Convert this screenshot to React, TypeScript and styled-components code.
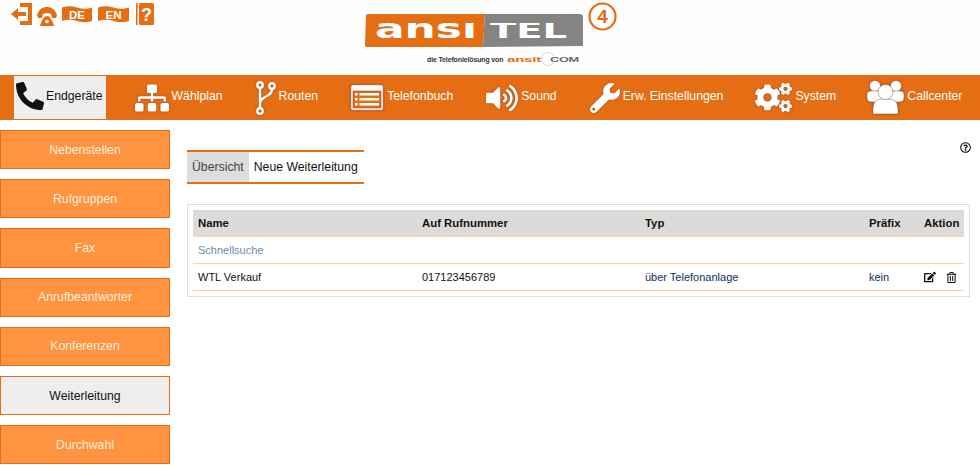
import React from 'react'
import styled, { createGlobalStyle } from 'styled-components'
import {
  FaCogs,
  FaEdit,
  FaPhoneAlt,
  FaRegQuestionCircle,
  FaRegTrashAlt,
  FaSitemap,
  FaVolumeUp,
  FaWrench,
} from 'react-icons/fa'

const ORANGE = '#e56e15'

const GlobalStyle = createGlobalStyle`
  html, body {
    margin: 0;
    padding: 0;
    height: 474px;
    overflow: hidden;
    background: #fff;
    font-family: 'Liberation Sans', Arial, sans-serif;
    font-size: 12.25px;
  }
`

const Header = styled.header`
  height: 75px;
  background: #fefefe;
  display: grid;
  grid-template-columns: 365px 218px 1fr;
`

const QuickIcons = styled.div`
  display: flex;
  align-items: flex-start;
  gap: 4px;
  padding: 3px 0 0 11px;
`

const HandsetSvg = styled.svg`
  margin-top: 4px;
`

const FlagSvg = styled.svg<{ $left?: number }>`
  margin-top: 3px;
  margin-left: ${({ $left }) => $left || 0}px;
`

const GuideSvg = styled.svg`
  margin-left: 3px;
`

const LogoBox = styled.div`
  display: flex;
  flex-direction: column;
  padding-top: 13px;
  position: relative;
`

const VersionMark = styled.svg`
  position: absolute;
  left: 223px;
  top: 2px;
`

const Tagline = styled.div`
  display: flex;
  align-items: center;
  height: 16px;
  margin-top: 4px;
  padding-left: 62px;
  gap: 4px;
  font-size: 7px;
  font-weight: bold;
  letter-spacing: -0.14px;
  color: #333;
  white-space: nowrap;
`

const Nav = styled.nav`
  height: 45px;
  background: ${ORANGE};
  display: flex;
  align-items: center;
  padding-left: 14px;
`

const NavItem = styled.div<{ $active?: boolean; $gap: number }>`
  height: 43px;
  margin-right: ${({ $gap }) => $gap}px;
  padding: 0 3px 0 2px;
  display: flex;
  align-items: center;
  gap: 3px;
  color: ${({ $active }) => ($active ? '#111' : '#fff')};
  background: ${({ $active }) => ($active ? '#eee' : 'transparent')};
  white-space: nowrap;

  & svg {
    flex: none;
    filter: ${({ $active }) =>
      $active ? 'none' : 'drop-shadow(0 0 1px rgba(110, 60, 50, 0.7))'};
  }
`

const NavLabel = styled.span`
  padding-bottom: 4px;
`

const Handset = styled(FaPhoneAlt)`
  margin: 0 -1px 4px 0;
`

const Main = styled.main`
  display: grid;
  grid-template-columns: 170px 1fr;
  column-gap: 17px;
  padding: 10px 10px 0 0;
`

const Sidebar = styled.aside`
  display: flex;
  flex-direction: column;
  gap: 10px;
`

const SideItem = styled.div<{ $active?: boolean }>`
  height: 39.2px;
  box-sizing: border-box;
  border: 1px solid ${ORANGE};
  background: ${({ $active }) => ($active ? '#eee' : '#ff9340')};
  color: ${({ $active }) => ($active ? '#111' : '#ffeedd')};
  display: flex;
  align-items: center;
  justify-content: center;
`

const Content = styled.section`
  position: relative;
  padding-top: 20px;
`

const HelpButton = styled.div`
  position: absolute;
  right: -1px;
  top: 12px;
  line-height: 0;
  color: #111;
`

const Tabs = styled.div`
  display: inline-flex;
  height: 30px;
  border-top: 2px solid ${ORANGE};
  border-bottom: 2px solid ${ORANGE};
`

const Tab = styled.div<{ $active?: boolean }>`
  padding: 0 5px;
  display: flex;
  align-items: center;
  color: ${({ $active }) => ($active ? '#444' : '#111')};
  background: ${({ $active }) => ($active ? '#ddd' : '#fff')};
  &:last-child {
    padding-right: 6px;
  }
`

const Panel = styled.div`
  margin-top: 20px;
  border: 1px solid #ddd;
  padding: 5px;
`

const Row = styled.div<{ $head?: boolean }>`
  display: grid;
  grid-template-columns: 224px 223px 224px 55px 45px;
  height: 26px;
  align-items: center;
  border-bottom: 1px solid #fcd0a8;
  background: ${({ $head }) => ($head ? '#dcdbd9' : '#fff')};
  font-size: ${({ $head }) => ($head ? '11.375px' : '11px')};
  font-weight: ${({ $head }) => ($head ? 'bold' : 'normal')};
  color: #111;
`

const Cell = styled.div<{ $blue?: boolean }>`
  padding-left: 5px;
  color: ${({ $blue }) => ($blue ? '#0f2f60' : 'inherit')};
  white-space: nowrap;
`

const SearchLabel = styled.div`
  padding-left: 5px;
  color: #6d8bb0;
`

const Actions = styled.div`
  display: flex;
  align-items: center;
  gap: 10px;
  padding-left: 5px;
`

const BranchIcon = () => (
  <svg width="20" height="36" viewBox="0 0 20 36" fill="none" stroke="#fff" strokeWidth="2.4">
    <circle cx="4" cy="5" r="2.7" />
    <circle cx="16" cy="6" r="2.7" />
    <circle cx="4" cy="31" r="2.7" />
    <path d="M4 8v20M16 9c0 9-12 6-12 15" />
  </svg>
)

const BookIcon = () => (
  <svg width="34" height="27" viewBox="0 0 34 27">
    <rect x="0.8" y="0.8" width="32.4" height="25.4" rx="2" fill="#fff" stroke="#8a5a3c" strokeWidth="0.6" />
    <rect x="3" y="7" width="28" height="17" fill={ORANGE} stroke="#704030" strokeWidth="0.5" />
    <g fill="#fff">
      <rect x="5" y="9" width="2.5" height="2.5" />
      <rect x="5" y="14" width="2.5" height="2.5" />
      <rect x="5" y="19" width="2.5" height="2.5" />
      <rect x="9.5" y="9" width="19.5" height="2.5" />
      <rect x="9.5" y="14" width="19.5" height="2.5" />
      <rect x="9.5" y="19" width="19.5" height="2.5" />
    </g>
  </svg>
)

const TeamIcon = () => (
  <svg width="37" height="35" viewBox="0 0 37 35" fill="#fff" stroke="#8a5a3c" strokeWidth="0.5">
    <circle cx="8" cy="6" r="5.5" />
    <circle cx="29" cy="6" r="5.5" />
    <path d="M0 14Q0 11 4 11H12Q16 11 16 16V22H5Q0 22 0 18z" />
    <path d="M37 14Q37 11 33 11H25Q21 11 21 16V22H32Q37 22 37 18z" />
    <path d="M6 34V28Q6 20 14 19H23Q31 20 31 28V34z" strokeLinejoin="round" />
    <circle cx="18.5" cy="12" r="7.5" />
  </svg>
)

const ExitIcon = () => (
  <svg width="21" height="22" viewBox="0 0 21 22" fill={ORANGE}>
    <path d="M9 0h12v22H9v-4h8V4H9z" />
    <path d="M0 11 7 5v4h8v4H7v4z" />
  </svg>
)

const HandsetIcon = () => (
  <HandsetSvg width="22" height="20" viewBox="0 0 22 20" fill={ORANGE}>
    <path d="M1 8C3 2 7 0 11 0s8 2 10 8l-1 3h-4l-1-4C13 6 9 6 7 7l-1 4H2z" />
    <path d="M4 19c1-5 4-10 7-10s6 5 7 10z" />
    <circle cx="11" cy="14.5" r="1.8" fill="#fff" />
  </HandsetSvg>
)

const FlagIcon = ({ label, width, left }: { label: string; width: number; left?: number }) => (
  <FlagSvg width={width} height="17" viewBox={`0 0 ${width} 17`} $left={left}>
    <path
      d={`M0 1.5Q${width / 4} -1 ${width / 2} 1.5T${width} 1.5V15Q${(width * 3) / 4} 17.5 ${width / 2} 15T0 15z`}
      fill={ORANGE}
    />
    <text
      x={width / 2}
      y="13"
      textAnchor="middle"
      fontFamily="'Liberation Sans', sans-serif"
      fontSize="11.5"
      fontWeight="bold"
      fill="#fff"
    >
      {label}
    </text>
  </FlagSvg>
)

const GuideIcon = () => (
  <GuideSvg width="18" height="22" viewBox="0 0 18 22">
    <rect x="0" y="0" width="1.6" height="22" fill={ORANGE} />
    <rect x="3" y="0" width="15" height="22" rx="1.5" fill={ORANGE} />
    <text
      x="10.5"
      y="17.5"
      textAnchor="middle"
      fontFamily="'Liberation Sans', sans-serif"
      fontSize="18"
      fontWeight="bold"
      fill="#fff"
    >
      ?
    </text>
  </GuideSvg>
)

const LogoMark = () => (
  <svg width="218" height="34" viewBox="0 0 218 34">
    <defs>
      <clipPath id="logoLetters">
        <rect x="0" y="10" width="218" height="16" />
      </clipPath>
    </defs>
    <path d="M3 1H120L118 34H2Q0 34 0 32L1 3Q1 1 3 1z" fill={ORANGE} />
    <path d="M120 1H215Q218 1 218 4V33L118 34z" fill="#858482" />
    <g clipPath="url(#logoLetters)">
      <text
        x="10"
        y="25"
        textLength="102"
        lengthAdjust="spacingAndGlyphs"
        fontFamily="'DejaVu Sans', sans-serif"
        fontSize="27"
        fontWeight="bold"
        fill="#fff"
      >
        ansi
      </text>
      <text
        x="125"
        y="25"
        textLength="77"
        lengthAdjust="spacingAndGlyphs"
        fontFamily="'DejaVu Sans', sans-serif"
        fontSize="20.5"
        fontWeight="bold"
        fill="#fff"
      >
        TEL
      </text>
    </g>
  </svg>
)

const SmallBrand = () => (
  <svg width="74" height="16" viewBox="0 0 74 16">
    <text
      x="0"
      y="11"
      textLength="34"
      lengthAdjust="spacingAndGlyphs"
      fontFamily="'Liberation Sans', sans-serif"
      fontSize="8"
      fontWeight="bold"
      fill={ORANGE}
    >
      ansit
    </text>
    <text
      x="43"
      y="10.5"
      textLength="29"
      lengthAdjust="spacingAndGlyphs"
      fontFamily="'Liberation Sans', sans-serif"
      fontSize="6.5"
      fill="#666"
    >
      COM
    </text>
    <circle cx="41" cy="8" r="6.5" fill="none" stroke="#777" strokeWidth="0.7" strokeDasharray="1 1.5" />
  </svg>
)

const navItems = [
  { label: 'Endgeräte', icon: <Handset size={28} />, gap: 27, active: true },
  { label: 'Wählplan', icon: <FaSitemap size={34} />, gap: 28 },
  { label: 'Routen', icon: <BranchIcon />, gap: 27 },
  { label: 'Telefonbuch', icon: <BookIcon />, gap: 28 },
  { label: 'Sound', icon: <FaVolumeUp size={32} />, gap: 28 },
  { label: 'Erw. Einstellungen', icon: <FaWrench size={30} />, gap: 27 },
  { label: 'System', icon: <FaCogs size={37} />, gap: 26 },
  { label: 'Callcenter', icon: <TeamIcon />, gap: 0 },
]

const sideItems = [
  'Nebenstellen',
  'Rufgruppen',
  'Fax',
  'Anrufbeantworter',
  'Konferenzen',
  'Weiterleitung',
  'Durchwahl',
]

const App = () => {
  return (
    <>
      <GlobalStyle />
      <Header>
        <QuickIcons>
          <ExitIcon />
          <HandsetIcon />
          <FlagIcon label="DE" width={30} />
          <FlagIcon label="EN" width={31} left={2} />
          <GuideIcon />
        </QuickIcons>
        <LogoBox>
          <LogoMark />
          <VersionMark width="29" height="29" viewBox="0 0 29 29">
            <circle cx="14.5" cy="14.5" r="13" fill="none" stroke={ORANGE} strokeWidth="2.2" />
            <text
              x="14.5"
              y="21"
              textAnchor="middle"
              fontFamily="'Liberation Sans', sans-serif"
              fontSize="19"
              fontWeight="bold"
              fill={ORANGE}
            >
              4
            </text>
          </VersionMark>
          <Tagline>
            die Telefonielösung von
            <SmallBrand />
          </Tagline>
        </LogoBox>
      </Header>
      <Nav>
        {navItems.map((item) => (
          <NavItem key={item.label} $active={item.active} $gap={item.gap}>
            {item.icon}
            <NavLabel>{item.label}</NavLabel>
          </NavItem>
        ))}
      </Nav>
      <Main>
        <Sidebar>
          {sideItems.map((label) => (
            <SideItem key={label} $active={label === 'Weiterleitung'}>
              {label}
            </SideItem>
          ))}
        </Sidebar>
        <Content>
          <HelpButton>
            <FaRegQuestionCircle size={11} />
          </HelpButton>
          <Tabs>
            <Tab $active>Übersicht</Tab>
            <Tab>Neue Weiterleitung</Tab>
          </Tabs>
          <Panel>
            <Row $head>
              <Cell>Name</Cell>
              <Cell>Auf Rufnummer</Cell>
              <Cell>Typ</Cell>
              <Cell>Präfix</Cell>
              <Cell>Aktion</Cell>
            </Row>
            <Row>
              <SearchLabel>Schnellsuche</SearchLabel>
            </Row>
            <Row>
              <Cell>WTL Verkauf</Cell>
              <Cell>017123456789</Cell>
              <Cell $blue>über Telefonanlage</Cell>
              <Cell $blue>kein</Cell>
              <Actions>
                <FaEdit size={12} />
                <FaRegTrashAlt size={11} />
              </Actions>
            </Row>
          </Panel>
        </Content>
      </Main>
    </>
  )
}

export default App
